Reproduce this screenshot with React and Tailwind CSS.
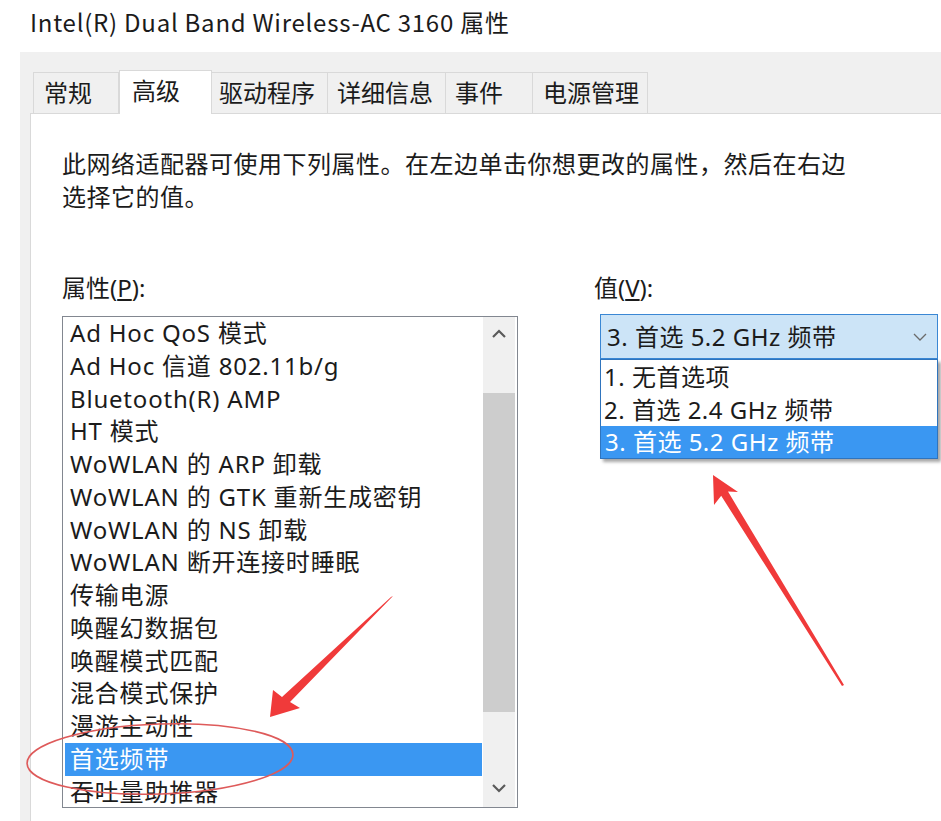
import React from "react";

const FONT = { fontFamily: '"Noto Sans", "Noto Sans CJK SC", sans-serif' };

const items = [
  "Ad Hoc QoS 模式",
  "Ad Hoc 信道 802.11b/g",
  "Bluetooth(R) AMP",
  "HT 模式",
  "WoWLAN 的 ARP 卸载",
  "WoWLAN 的 GTK 重新生成密钥",
  "WoWLAN 的 NS 卸载",
  "WoWLAN 断开连接时睡眠",
  "传输电源",
  "唤醒幻数据包",
  "唤醒模式匹配",
  "混合模式保护",
  "漫游主动性",
  "首选频带",
  "吞吐量助推器",
];

function Chevron({ up }) {
  return (
    <svg width="16" height="10" viewBox="0 0 16 10">
      <polyline
        points={up ? "2,8 8,2 14,8" : "2,2 8,8 14,2"}
        fill="none"
        stroke="#5a5a5a"
        strokeWidth="2.2"
      />
    </svg>
  );
}

export default function App() {
  return (
    <div
      className="relative w-[941px] h-[821px] bg-white overflow-hidden flex flex-col text-[#1b1b1b]"
      style={FONT}
    >
      {/* Title */}
      <div
        className="h-[52px] pl-[30px] pt-[6px] text-[24px] leading-[32px] tracking-[0.75px] shrink-0 whitespace-nowrap"
        style={{ fontFamily: '"Noto Sans CJK SC", sans-serif' }}
      >
        Intel(R) Dual Band Wireless-AC 3160 属性
      </div>

      {/* Grey dialog body */}
      <div className="ml-[20px] flex-1 bg-[#f0f0f0] flex flex-col">
        {/* Tabs */}
        <div className="h-[61px] flex items-end pl-[13px] shrink-0 text-[24px]">
          <div className="w-[86px] h-[41px] pl-[10px] flex items-center border border-b-0 border-[#d9d9d9] bg-[#f0f0f0]">
            常规
          </div>
          <div className="w-[93px] h-[44px] pl-[12px] flex items-center pb-[4px] border border-b-0 border-[#d9d9d9] bg-white -mb-px relative z-10">
            高级
          </div>
          <div className="w-[116px] h-[41px] pl-[7px] flex items-center border border-b-0 border-l-0 border-[#d9d9d9] bg-[#f0f0f0]">
            驱动程序
          </div>
          <div className="w-[118px] h-[41px] pl-[9px] flex items-center border border-b-0 border-l-0 border-[#d9d9d9] bg-[#f0f0f0]">
            详细信息
          </div>
          <div className="w-[87px] h-[41px] pl-[9px] flex items-center border border-b-0 border-l-0 border-[#d9d9d9] bg-[#f0f0f0]">
            事件
          </div>
          <div className="w-[115px] h-[41px] pl-[10px] flex items-center border border-b-0 border-l-0 border-[#d9d9d9] bg-[#f0f0f0]">
            电源管理
          </div>
        </div>

        {/* Panel */}
        <div className="ml-[10px] flex-1 bg-white border-t border-l border-[#d9d9d9] pl-[31px] pt-[33px] text-[24px]">
          <div className="leading-[33px] tracking-[0.5px] whitespace-nowrap">
            此网络适配器可使用下列属性。在左边单击你想更改的属性，然后在右边
            <br />
            选择它的值。
          </div>

          <div className="mt-[58px] flex">
            {/* Left column */}
            <div className="w-[456px] flex flex-col">
              <div className="h-[33px] leading-[33px]">
                属性(<span className="underline underline-offset-2">P</span>):
              </div>
              <div className="mt-[12px] h-[492px] border border-[#828790] flex">
                <div className="flex-1 pl-[2px] pr-[1px] flex flex-col tracking-[0.8px]">
                  {items.map((t) => (
                    <div
                      key={t}
                      className={
                        t === "首选频带"
                          ? "h-[32.75px] leading-[32.75px] pl-[5px] bg-[#3a97f2] text-white whitespace-nowrap"
                          : "h-[32.75px] leading-[32.75px] pl-[5px] whitespace-nowrap"
                      }
                    >
                      {t}
                    </div>
                  ))}
                </div>
                <div className="w-[34px] pr-[2px] flex">
                  <div className="flex-1 bg-[#f0f0f0] flex flex-col items-stretch">
                    <div className="h-[33px] flex items-center justify-center">
                      <Chevron up />
                    </div>
                    <div className="flex-1 flex flex-col">
                      <div className="mt-[43px] h-[319px] bg-[#cdcdcd]" />
                    </div>
                    <div className="h-[38px] flex items-center justify-center">
                      <Chevron />
                    </div>
                  </div>
                </div>
              </div>
            </div>

            {/* Right column */}
            <div className="ml-[76px] flex flex-col">
              <div className="h-[33px] leading-[33px]">
                值(<span className="underline underline-offset-2">V</span>):
              </div>
              <div className="mt-[10px] ml-[6px] w-[338px] relative tracking-[0.5px]">
                <div className="h-[45px] border border-[#3a87d4] bg-[#cce4f7] flex items-center pl-[6px] pr-[10px] justify-between">
                  <span className="whitespace-nowrap">3. 首选 5.2 GHz 频带</span>
                  <svg width="14" height="8" viewBox="0 0 14 8">
                    <polyline
                      points="1,1 7,7 13,1"
                      fill="none"
                      stroke="#6b6b6b"
                      strokeWidth="1.3"
                    />
                  </svg>
                </div>
                <div className="absolute left-0 top-full w-full border border-[#2f74bd] bg-white shadow-[3px_3px_3px_rgba(0,0,0,0.35)] flex flex-col">
                  <div className="h-[33px] leading-[33px] pl-[3px] whitespace-nowrap">1. 无首选项</div>
                  <div className="h-[33px] leading-[33px] pl-[3px] whitespace-nowrap">2. 首选 2.4 GHz 频带</div>
                  <div className="h-[32px] leading-[32px] pl-[4px] bg-[#3a97f2] text-white whitespace-nowrap">
                    3. 首选 5.2 GHz 频带
                  </div>
                </div>
              </div>
            </div>
          </div>
        </div>
      </div>

      {/* Annotation overlay */}
      <svg
        className="absolute inset-0 pointer-events-none"
        width="941"
        height="821"
        viewBox="0 0 941 821"
      >
        <ellipse
          cx="160"
          cy="759"
          rx="133"
          ry="35"
          transform="rotate(-2 160 759)"
          fill="none"
          stroke="#de5a5a"
          strokeWidth="1.6"
        />
        <polygon
          points="393,596 290,702 300,708 270,717 273,690 282,697 391,597"
          fill="#f03a3a"
        />
        <polygon
          points="713,475 738,492 728,491.6 844,685 842,686 721.2,495.8 714,505"
          fill="#f03a3a"
        />
      </svg>
    </div>
  );
}
